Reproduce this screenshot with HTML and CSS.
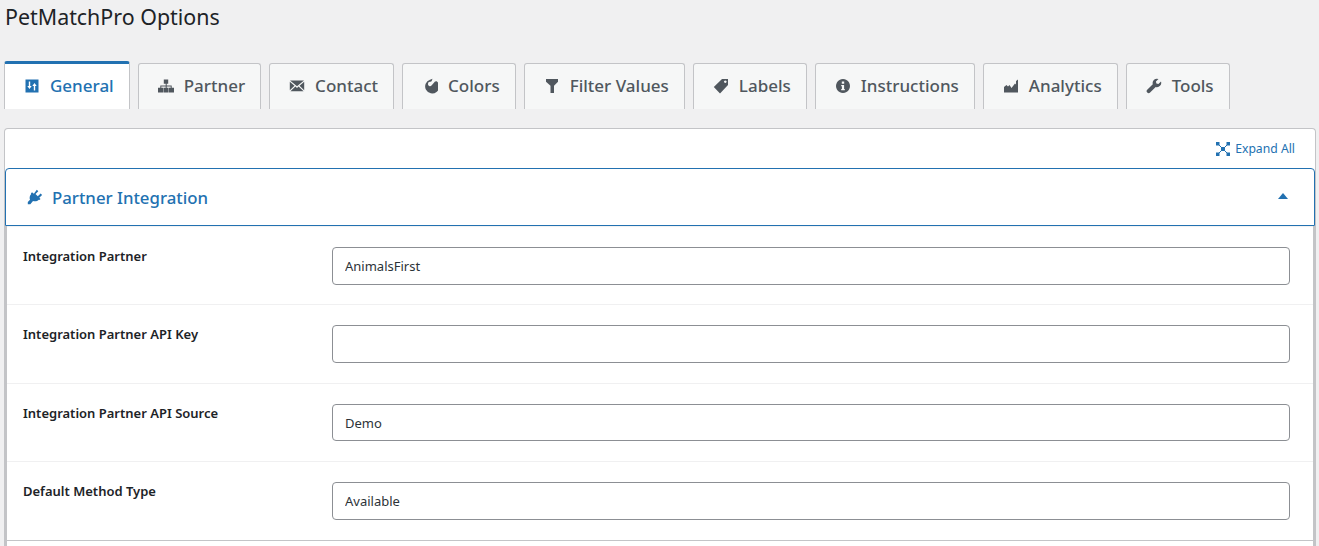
FILE: index.html
```html
<!DOCTYPE html>
<html lang="en">
<head>
    <meta charset="UTF-8">
    <title>PetMatchPro Options</title>
    <link rel="stylesheet" href="styles.css">
</head>
<body>
    <h1 class="page-title">PetMatchPro Options</h1>
    <nav class="tabs">
        <a class="tab tab-active">
            <svg class="tab-icon" viewBox="0 0 16 16"><path fill-rule="evenodd" d="M1.500 1.500h13v13h-13zM4.800 3.500v4.500H3.300L5.500 11l2.200-3H6.200V3.500zM9.800 12.500V8H8.300l2.200-3 2.200 3h-1.500v4.500z"/></svg>
            General
        </a>
        <a class="tab">
            <svg class="tab-icon" viewBox="0 0 16 16"><path d="M5.800 1.500h4.400v4.200H8.700v1.800h5v2.300H16v4.700h-5.200V9.800h1.900V8.500H8.700v1.300h1.700v4.700H5.600V9.800h2.100V8.500H3.300v1.300h1.900v4.700H0V9.800h2.300V7.500h5.400V5.700H5.800z"/></svg>
            Partner
        </a>
        <a class="tab">
            <svg class="tab-icon" viewBox="0 0 16 16"><path d="M1 2.500h14L8 8.300zM.8 3.800l4.700 4-4.700 4.500zM15.200 3.800v8.500l-4.700-4.500zM6.400 8.500 8 9.900l1.600-1.400 5 4.800H1.400z"/></svg>
            Contact
        </a>
        <a class="tab">
            <svg class="tab-icon" viewBox="0 0 16 16"><path fill-rule="evenodd" d="M8 1.800 10.500.8 9.600 3.200 8.500 3.700A2.200 2.200 0 0 0 6 6 2 2 0 0 0 9.500 7.500L13 3.500 14.800 3.200A7 7 0 1 1 8 1.800z"/></svg>
            Colors
        </a>
        <a class="tab">
            <svg class="tab-icon" viewBox="0 0 16 16"><path d="M2 1h12v2.800L10 7.800V15H6.500V7.800L2 3.800z"/></svg>
            Filter Values
        </a>
        <a class="tab">
            <svg class="tab-icon" viewBox="0 0 16 16"><path fill-rule="evenodd" d="M9 1h6v6l-8 8.500L.8 9zM12.300 2.400a1.300 1.300 0 1 0 .01 0z"/></svg>
            Labels
        </a>
        <a class="tab">
            <svg class="tab-icon" viewBox="0 0 16 16"><path fill-rule="evenodd" d="M8 1a7 7 0 1 1-.01 0zM6.800 3.500v2.200h2.400V3.500zM6.200 7v1.300h.7v2.700h-.7v1.300h3.600V11h-.7V7z"/></svg>
            Instructions
        </a>
        <a class="tab">
            <svg class="tab-icon" viewBox="0 0 16 16"><path d="M1 9l2.500-2 1.500 1.500L6.500 7l2 3 3.500-4.500 1 1V3L15 1.500V14.500H1z"/></svg>
            Analytics
        </a>
        <a class="tab">
            <svg class="tab-icon" viewBox="0 0 16 16"><path d="M15 3.500l-2.600 2.400-2-.4-.5-2L12.500 1A4.300 4.300 0 0 0 6.800 6.200L1.200 11.700a2 2 0 0 0 2.900 2.800L9.700 9A4.300 4.300 0 0 0 15 3.500z"/></svg>
            Tools
        </a>
    </nav>

    <div class="panel">
        <div class="panel-tools">
            <a class="expand-all">
                <svg class="expand-icon" viewBox="0 0 14 14"><path d="M2 2l10 10M12 2 2 12" stroke="#2271b1" stroke-width="1"/><rect x="0" y="0" width="3.500" height="3.500"/><rect x="10.500" y="0" width="3.500" height="3.500"/><rect x="0" y="10.500" width="3.500" height="3.500"/><rect x="10.500" y="10.500" width="3.500" height="3.500"/><rect x="5" y="5" width="4" height="4"/></svg>
                Expand All
            </a>
        </div>
        <div class="section-head">
            <svg class="section-icon" viewBox="0 0 16 16"><path d="M9.800.8l1.500 1.400-2.800 2.800 2.300 2.300 2.800-2.800 1.500 1.500-2.800 2.800 1.200 1.100-1.100 1.100-.6-.3c-1.600 1.600-3.800 2-5.800 1.200L3.300 15.300H.8v-2.400l2.200-2.100C2.200 8.900 2.700 6.600 4.200 5L3.900 4.400 5 3.300l1.900 1.500z"/></svg>
            <span class="section-title">Partner Integration</span>
            <span class="section-arrow"></span>
        </div>
        <div class="section-body">
            <div class="field-row">
                <label class="field-label">Integration Partner</label>
                <input class="field-input" type="text" value="AnimalsFirst">
            </div>
            <div class="field-row">
                <label class="field-label">Integration Partner API Key</label>
                <input class="field-input" type="text" value="">
            </div>
            <div class="field-row">
                <label class="field-label">Integration Partner API Source</label>
                <input class="field-input" type="text" value="Demo">
            </div>
            <div class="field-row field-row-last">
                <label class="field-label">Default Method Type</label>
                <input class="field-input" type="text" value="Available">
            </div>
        </div>
    </div>
</body>
</html>
```

FILE: styles.css
```css
html, body {
    height: 546px;
    overflow: hidden;
}
body {
    display: flex;
    flex-direction: column;
    margin: 0;
    background: #f0f0f1;
    color: #1d2327;
    font-family: "Noto Sans", sans-serif;
    font-size: 13px;
}
.page-title {
    flex: none;
    margin: 0;
    padding: 2px 0 0 5px;
    height: 61px;
    box-sizing: border-box;
    font-size: 21.4px;
    line-height: 29px;
    font-weight: 400;
}
.tabs {
    flex: none;
    display: flex;
    gap: 8px;
    padding-left: 4px;
    height: 48px;
    align-items: flex-end;
}
.tab {
    display: flex;
    align-items: center;
    gap: 10px;
    height: 46px;
    padding: 0 15px 2px 19px;
    box-sizing: border-box;
    background: #f6f7f7;
    border: 1px solid #c3c4c7;
    border-bottom: 0;
    border-radius: 3px 3px 0 0;
    color: #50575e;
    font-size: 17px;
    font-weight: 500;
}
.tab-active {
    height: 48px;
    background: #fff;
    border-top: 3px solid #2271b1;
    color: #2271b1;
}
.tab-icon {
    width: 16px;
    height: 16px;
    fill: currentColor;
    flex: none;
}
.panel {
    flex: 1;
    display: flex;
    flex-direction: column;
    margin: 19px 3px 0 4px;
    background: #fff;
    border: 1px solid #c3c4c7;
    border-bottom: 0;
    border-radius: 4px 4px 0 0;
}
.panel-tools {
    flex: none;
    display: flex;
    justify-content: flex-end;
    align-items: center;
    height: 39px;
    padding-right: 20px;
}
.expand-all {
    display: flex;
    align-items: center;
    gap: 5px;
    color: #2271b1;
    font-size: 12.2px;
}
.expand-icon {
    width: 14px;
    height: 14px;
    fill: #2271b1;
}
.section-head {
    flex: none;
    display: flex;
    align-items: center;
    gap: 9px;
    height: 58px;
    box-sizing: border-box;
    padding: 0 26px 0 21px;
    border: 1px solid #2271b1;
    border-radius: 4px 4px 0 0;
    box-shadow: 0 1px 1px rgba(0, 0, 0, 0.06);
    color: #2271b1;
}
.section-icon {
    width: 16px;
    height: 16px;
    fill: currentColor;
}
.section-title {
    flex: 1;
    font-size: 16.8px;
    font-weight: 500;
}
.section-arrow {
    margin-top: -2px;
    width: 0;
    height: 0;
    border-left: 5px solid transparent;
    border-right: 5px solid transparent;
    border-bottom: 6px solid #2271b1;
}
.section-body {
    flex: 1;
    border-left: 2px solid #c3c4c7;
    border-right: 2px solid #c3c4c7;
}
.field-row {
    display: grid;
    grid-template-columns: 309px 958px;
    height: 78.4px;
    box-sizing: border-box;
    padding: 20px 0 0 16px;
    border-top: 1px solid #f0f0f1;
}
.field-row:first-child {
    border-top-color: transparent;
}
.field-row-last {
    height: 79.4px;
    border-bottom: 1px solid #c3c4c7;
}
.field-label {
    font-size: 13px;
    font-weight: 600;
    line-height: 18px;
}
.field-input {
    width: 100%;
    height: 37.5px;
    box-sizing: border-box;
    padding: 0 12px;
    background: #fff;
    border: 1px solid #8c8f94;
    border-radius: 4px;
    color: #2c3338;
    font-family: inherit;
    font-size: 13px;
}
```
